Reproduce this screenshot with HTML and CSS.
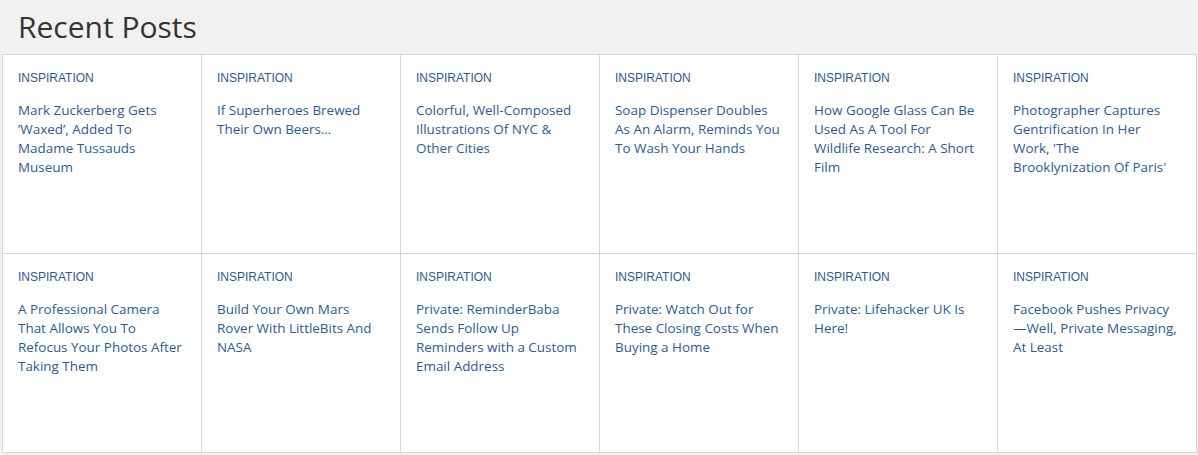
FILE: index.html
```html
<!DOCTYPE html>
<html lang="en">
<head>
<meta charset="utf-8">
<title>Recent Posts</title>
<link rel="stylesheet" href="styles.css">
</head>
<body>
<section class="recent">
  <h2 class="recent-title">Recent Posts</h2>
  <div class="post-grid">
    <article class="post"><a class="post-cat" href="#">INSPIRATION</a><a class="post-link" href="#">Mark Zuckerberg Gets ’Waxed’, Added To Madame Tussauds Museum</a></article>
    <article class="post"><a class="post-cat" href="#">INSPIRATION</a><a class="post-link" href="#">If Superheroes Brewed Their Own Beers…</a></article>
    <article class="post"><a class="post-cat" href="#">INSPIRATION</a><a class="post-link" href="#">Colorful, Well-Composed Illustrations Of NYC &amp; Other Cities</a></article>
    <article class="post"><a class="post-cat" href="#">INSPIRATION</a><a class="post-link" href="#">Soap Dispenser Doubles As An Alarm, Reminds You To Wash Your Hands</a></article>
    <article class="post"><a class="post-cat" href="#">INSPIRATION</a><a class="post-link" href="#">How Google Glass Can Be Used As A Tool For Wildlife Research: A Short Film</a></article>
    <article class="post"><a class="post-cat" href="#">INSPIRATION</a><a class="post-link" href="#">Photographer Captures Gentrification In Her Work, 'The Brooklynization Of Paris'</a></article>
    <article class="post"><a class="post-cat" href="#">INSPIRATION</a><a class="post-link" href="#">A Professional Camera That Allows You To Refocus Your Photos After Taking Them</a></article>
    <article class="post"><a class="post-cat" href="#">INSPIRATION</a><a class="post-link" href="#">Build Your Own Mars Rover With LittleBits And NASA</a></article>
    <article class="post"><a class="post-cat" href="#">INSPIRATION</a><a class="post-link" href="#">Private: ReminderBaba Sends Follow Up Reminders with a Custom Email Address</a></article>
    <article class="post"><a class="post-cat" href="#">INSPIRATION</a><a class="post-link" href="#">Private: Watch Out for These Closing Costs When Buying a Home</a></article>
    <article class="post"><a class="post-cat" href="#">INSPIRATION</a><a class="post-link" href="#">Private: Lifehacker UK Is Here!</a></article>
    <article class="post"><a class="post-cat" href="#">INSPIRATION</a><a class="post-link" href="#">Facebook Pushes Privacy—Well, Private Messaging, At Least</a></article>
  </div>
</section>
</body>
</html>
```
FILE: styles.css
```css
* { box-sizing: border-box; }
html, body { margin: 0; padding: 0; }
body {
  background: #f1f1f0;
  font-family: "Open Sans", "Noto Sans", sans-serif;
  width: 1198px;
  height: 455px;
  overflow: hidden;
}
.recent { padding: 0 0 0 2px; }
.recent-title {
  margin: 0;
  height: 54px;
  padding: 7px 0 0 16px;
  font-family: "Open Sans", sans-serif;
  font-weight: 400;
  font-size: 30px;
  line-height: 40px;
  color: #333333;
}
.post-grid {
  display: grid;
  grid-template-columns: repeat(6, 199px);
  grid-auto-rows: 199px;
  width: 1195px;
  border-left: 1px solid #d6d6d6;
  border-top: 1px solid #d6d6d6;
  background: #ffffff;
}
.post {
  border-right: 1px solid #d6d6d6;
  border-bottom: 1px solid #d6d6d6;
  padding: 16px 17px 0 15px;
  display: flex;
  flex-direction: column;
}
.post-cat {
  font-family: "Liberation Sans", Arial, sans-serif;
  font-size: 12px;
  line-height: 14px;
  color: #2d5a98;
  text-decoration: none;
  margin-bottom: 16px;
}
.post-link {
  font-family: "Open Sans", sans-serif;
  font-size: 13.45px;
  line-height: 19px;
  color: #2b5b9d;
  text-decoration: none;
}
```
